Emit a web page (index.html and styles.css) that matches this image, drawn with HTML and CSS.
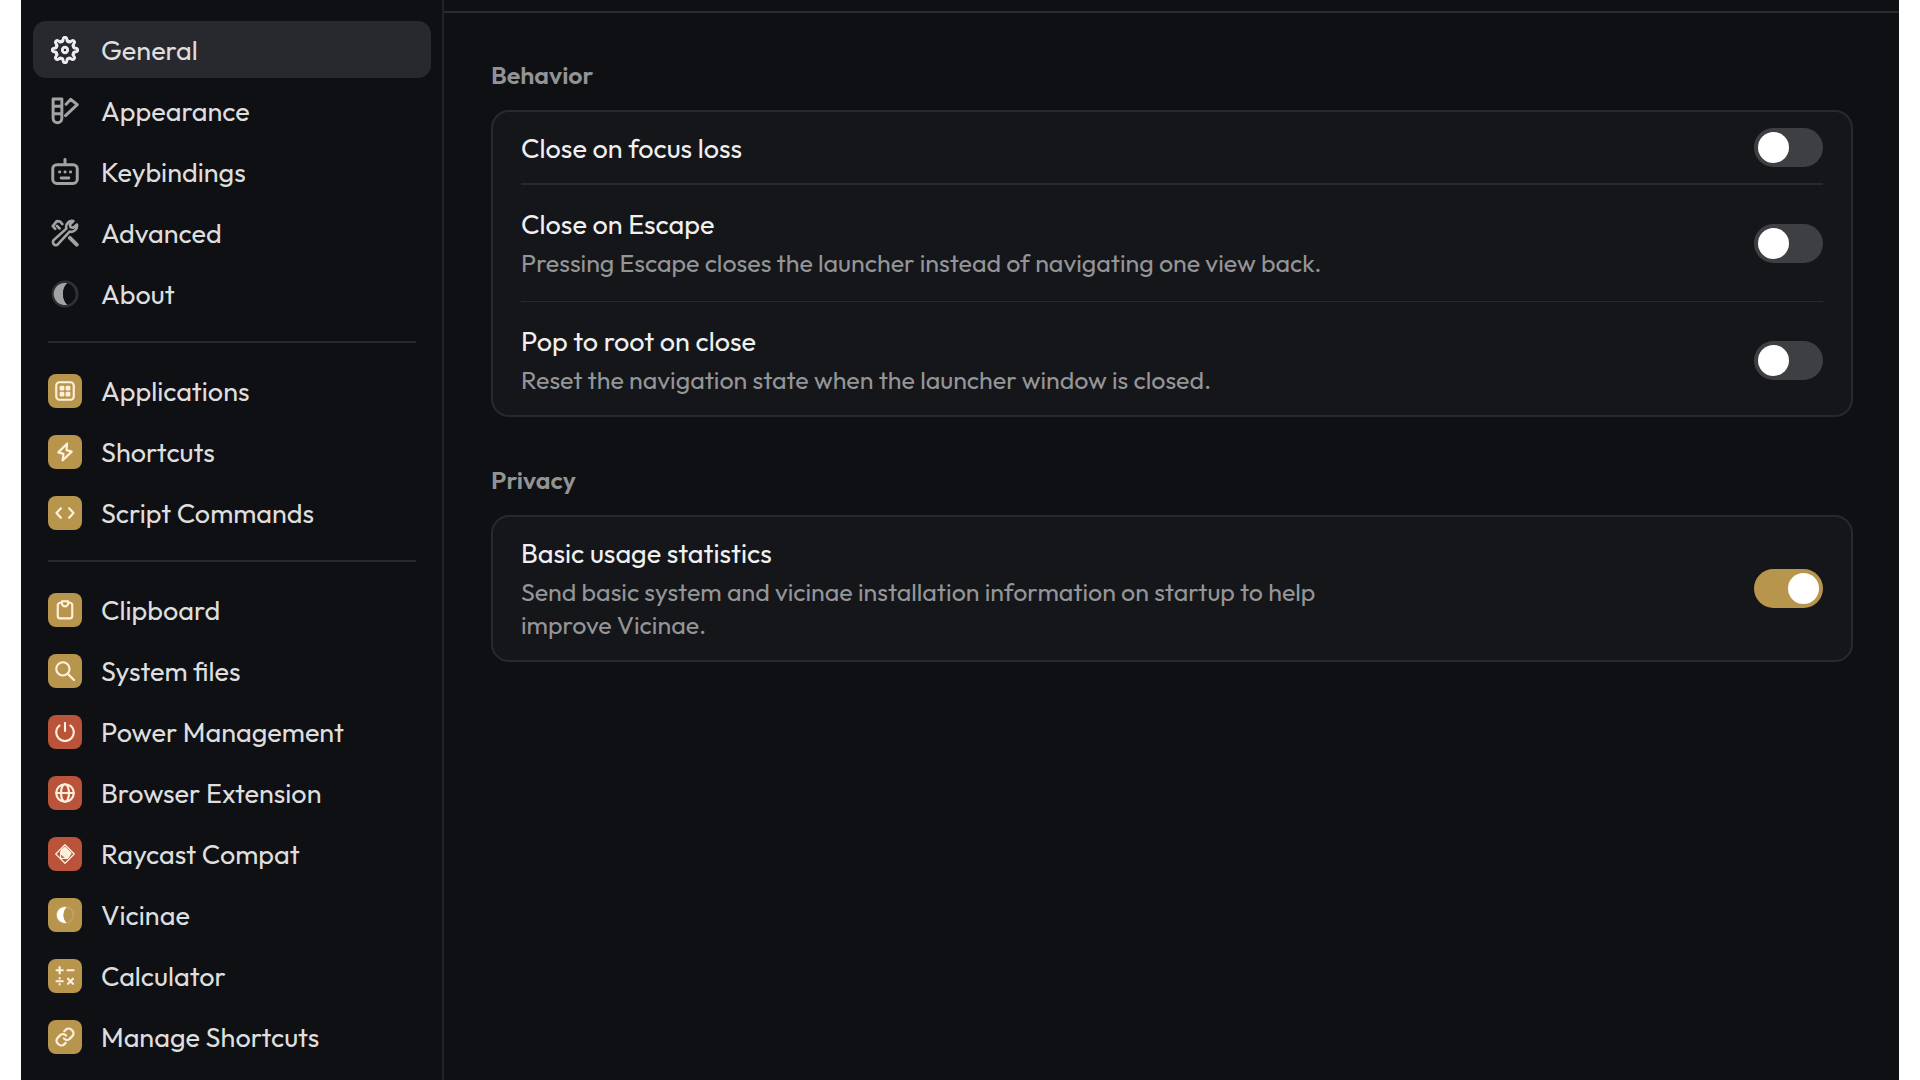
FILE: index.html
```html
<!DOCTYPE html>
<html lang="en">
<head>
<meta charset="utf-8">
<meta name="viewport" content="width=device-width, initial-scale=1">
<title>Settings</title>
<link rel="stylesheet" href="styles.css">
</head>
<body>
<div class="window">
  <nav class="sidebar" aria-label="Settings">
    <div class="nav-group">
      <a class="nav-item nav-item--active" href="#general" aria-current="page">
        <span class="icon"><svg viewBox="0 0 24 24" stroke-width="2.5"><defs><path id="tooth" d="M-3.1-7.4Q-1.9-6.9-1.7-8.6-1.6-10.9 0-10.9 1.6-10.9 1.7-8.6 1.9-6.9 3.1-7.4"/></defs><g transform="translate(12 12)"><use href="#tooth"/><use href="#tooth" transform="rotate(45)"/><use href="#tooth" transform="rotate(90)"/><use href="#tooth" transform="rotate(135)"/><use href="#tooth" transform="rotate(180)"/><use href="#tooth" transform="rotate(225)"/><use href="#tooth" transform="rotate(270)"/><use href="#tooth" transform="rotate(315)"/><circle r="2.3"/></g></svg></span>
        General
      </a>
      <a class="nav-item" href="#appearance">
        <span class="icon"><svg viewBox="0 0 16 16"><path d="M1.2 1.2h5v11a2.5 2.5 0 0 1-5 0zM1.2 5.3h5M1.2 9.6h5M8.6 4.1l2.7-2.8 3.7 3.1-6.7 6.2"/></svg></span>
        Appearance
      </a>
      <a class="nav-item" href="#keybindings">
        <span class="icon"><svg viewBox="0 0 16 16"><rect x="1" y="3.8" width="14" height="10.8" rx="2.4"/><path d="M8 .9v2.6M5.8 11.4h4.4"/><path d="M4.9 8h.1M8 8h.1M11.1 8h.1"/></svg></span>
        Keybindings
      </a>
      <a class="nav-item" href="#advanced">
        <span class="icon"><svg viewBox="0 0 16 16" stroke-width="1.5"><path d="M12.8 1.2a3.4 3.4 0 0 0-4 4.3L1.6 12a1.6 1.6 0 0 0 2.4 2.4l6.6-7.2a3.4 3.4 0 0 0 4.2-4L12.7 5l-1.5-.3-.4-1.5zM2.4 5.6L1 4.1l2.3-2.9 1.8.2 1.4 1.5M3.4 3.9l1.5 1.5"/><path d="M10.8 10.8l3.9 3.9" stroke-width="2.2"/></svg></span>
        Advanced
      </a>
      <a class="nav-item" href="#about">
        <span class="icon"><svg viewBox="0 0 16 16" stroke="none"><circle cx="8" cy="8" r="7.7" fill="#303134"/><path d="M9.4 1.9a6.3 6.3 0 1 0 0 12.2C6 11.5 6 4.5 9.4 1.9z" fill="#a2a3a5"/><path d="M9.4 1.9C6 4.5 6 11.5 9.4 14.1a6.3 6.3 0 0 0 0-12.2z" fill="#0f1013"/></svg></span>
        About
      </a>
    </div>
    <hr class="nav-rule">
    <div class="nav-group">
      <a class="nav-item" href="#applications">
        <span class="icon tile"><svg viewBox="0 0 16 16"><rect x="1" y="1" width="14" height="14" rx="2.6"/><g fill="currentColor" stroke="none"><rect x="3.7" y="3.7" width="3.8" height="3.8" rx="1"/><rect x="8.5" y="3.7" width="3.8" height="3.8" rx="1"/><rect x="3.7" y="8.5" width="3.8" height="3.8" rx="1"/><rect x="8.5" y="8.5" width="3.8" height="3.8" rx="1"/></g></svg></span>
        Applications
      </a>
      <a class="nav-item" href="#shortcuts">
        <span class="icon tile"><svg viewBox="0 0 16 16"><path d="M9.7 1.3L2.6 8.3l4.2 1.2-.8 5.2 7.4-7-4.2-1.2z"/></svg></span>
        Shortcuts
      </a>
      <a class="nav-item" href="#scripts">
        <span class="icon tile"><svg viewBox="0 0 16 16"><path d="M4.7 4.2L1.2 8l3.5 3.8M11.3 4.2L14.8 8l-3.5 3.8"/></svg></span>
        Script Commands
      </a>
    </div>
    <hr class="nav-rule">
    <div class="nav-group">
      <a class="nav-item" href="#clipboard">
        <span class="icon tile"><svg viewBox="0 0 16 16"><path d="M5.5 2.2H4.2a2 2 0 0 0-2 2v8.5a2 2 0 0 0 2 2h7.6a2 2 0 0 0 2-2V4.2a2 2 0 0 0-2-2h-1.3"/><path d="M5.5 1h5v1.6a2.5 2.5 0 0 1-5 0z"/></svg></span>
        Clipboard
      </a>
      <a class="nav-item" href="#files">
        <span class="icon tile"><svg viewBox="0 0 16 16"><circle cx="6.3" cy="6.3" r="5.3"/><path d="M10.3 10.3l4.9 4.9"/></svg></span>
        System files
      </a>
      <a class="nav-item" href="#power">
        <span class="icon tile tile--red"><svg viewBox="0 0 16 16"><path d="M8 .8v6.4M3.6 2.8a7 7 0 1 0 8.8 0"/></svg></span>
        Power Management
      </a>
      <a class="nav-item" href="#browser">
        <span class="icon tile tile--red"><svg viewBox="0 0 16 16"><circle cx="8" cy="8" r="7"/><ellipse cx="8" cy="8" rx="3.2" ry="7"/><path d="M1 8h14"/></svg></span>
        Browser Extension
      </a>
      <a class="nav-item" href="#raycast">
        <span class="icon tile tile--red"><svg viewBox="0 0 16 16" stroke-width="1"><path d="M8 .6L15.4 8 8 15.4.6 8zM4.5 6v5.500h5.500"/><path d="M5.200 4.800L8 2.600l4.800 4.800-2 3.200H8L5.200 8z" fill="currentColor"/></svg></span>
        Raycast Compat
      </a>
      <a class="nav-item" href="#vicinae">
        <span class="icon tile"><svg viewBox="0 0 16 16" stroke="none"><circle cx="8" cy="8" r="7.2" fill="#c4a768"/><path d="M9.4 1.9a6.3 6.3 0 1 0 0 12.2C6 11.5 6 4.5 9.4 1.9z" fill="#fff"/><path d="M9.4 1.9C6 4.5 6 11.5 9.4 14.1a6.3 6.3 0 0 0 0-12.2z" fill="#b6944c"/></svg></span>
        Vicinae
      </a>
      <a class="nav-item" href="#calculator">
        <span class="icon tile"><svg viewBox="0 0 16 16"><path d="M3.7.9v5M1.2 3.4h5M9.9 3.4h5M1.2 12.2h5M3.7 9.7v.2M3.7 14.5v.2M10.4 10.2l4 4M14.4 10.2l-4 4"/></svg></span>
        Calculator
      </a>
      <a class="nav-item" href="#manage">
        <span class="icon tile"><svg viewBox="0 0 16 16"><path d="M7.4 3.4l1.3-1.3a3.1 3.1 0 0 1 4.4 0l.8.8a3.1 3.1 0 0 1 0 4.4l-2.400 2.400a3.1 3.1 0 0 1-4.400-.6"/><path d="M8.600 12.600l-1.300 1.300a3.100 3.100 0 0 1-4.400 0l-.8-.8a3.100 3.100 0 0 1 0-4.400l2.400-2.400a3.100 3.100 0 0 1 4.400.6"/></svg></span>
        Manage Shortcuts
      </a>
    </div>
  </nav>

  <main class="main">
    <div class="content">
      <section class="section">
        <h2 class="section-title">Behavior</h2>
        <div class="card">
          <div class="row row--single">
            <label class="row-title" for="focus-loss">Close on focus loss</label>
            <input class="switch" type="checkbox" role="switch" id="focus-loss">
          </div>
          <div class="row">
            <div class="row-text">
              <label class="row-title" for="escape">Close on Escape</label>
              <p class="row-desc">Pressing Escape closes the launcher instead of navigating one view back.</p>
            </div>
            <input class="switch" type="checkbox" role="switch" id="escape">
          </div>
          <div class="row">
            <div class="row-text">
              <label class="row-title" for="pop-root">Pop to root on close</label>
              <p class="row-desc">Reset the navigation state when the launcher window is closed.</p>
            </div>
            <input class="switch" type="checkbox" role="switch" id="pop-root">
          </div>
        </div>
      </section>
      <section class="section">
        <h2 class="section-title">Privacy</h2>
        <div class="card">
          <div class="row">
            <div class="row-text">
              <label class="row-title" for="statistics">Basic usage statistics</label>
              <p class="row-desc">Send basic system and vicinae installation information on startup to help improve Vicinae.</p>
            </div>
            <input class="switch" type="checkbox" role="switch" id="statistics" checked>
          </div>
        </div>
      </section>
    </div>
  </main>
</div>
</body>
</html>
```
FILE: styles.css
```css
* {
  box-sizing: border-box;
}

body {
  margin: 0;
  padding: 0 21px;
  background: #fff;
  color: #dedede;
  font-family: "Outfit", "Lato", sans-serif;
  font-size: 27px;
  font-weight: 400;
}

.window {
  display: flex;
  min-height: 100vh;
  background: #0f1013;
}

.sidebar {
  flex: 0 0 423px;
  padding: 21px 11px 12px 12px;
  border-right: 2px solid #222326;
}

.nav-group {
  display: flex;
  flex-direction: column;
  gap: 4px;
}

.nav-item {
  display: flex;
  align-items: center;
  gap: 19px;
  height: 57px;
  padding: 0 15px;
  border-radius: 13px;
  color: inherit;
  line-height: 36px;
  text-decoration: none;
  white-space: nowrap;
}

.nav-item--active {
  background: #28282f;
}

.nav-rule {
  height: 2px;
  margin: 19px 15px;
  border: 0;
  background: #28292c;
}

.icon {
  display: flex;
  align-items: center;
  justify-content: center;
  flex: none;
  width: 34px;
  height: 34px;
  color: #a2a3a5;
}

.icon svg {
  width: 28px;
  height: 28px;
  fill: none;
  stroke: currentColor;
  stroke-linecap: round;
  stroke-linejoin: round;
}

.icon svg:not([stroke-width]) {
  stroke-width: 1.7px;
}

.icon svg[stroke="none"] {
  stroke: none;
}

.nav-item--active .icon {
  color: #ececee;
}

.tile {
  border-radius: 8px;
  background: #b8954d;
  color: #fff0dc;
}

.tile--red {
  background: #b9533a;
}

.tile svg {
  width: 20px;
  height: 20px;
}

.main {
  flex: 1;
  min-width: 0;
  padding-top: 11px;
}

.content {
  display: flex;
  flex-direction: column;
  gap: 47px;
  padding: 46px 46px 46px 47px;
  border-top: 2px solid #2a2b2e;
}

.section-title {
  margin: 0 0 19px;
  color: #929395;
  font-size: 25px;
  font-weight: 600;
  line-height: 32px;
}

.card {
  padding: 0 28px;
  border: 2px solid #28292c;
  border-radius: 18px;
  background: #15161a;
}

.row {
  display: flex;
  align-items: center;
  justify-content: space-between;
  gap: 48px;
  padding: 21px 0;
}

.row + .row {
  border-top: 2px solid #28292c;
}

.row:first-child {
  padding-top: 18px;
}

.row:last-child {
  padding-bottom: 18px;
  border-top-width: 1px;
}

.row--single,
.row--single:first-child {
  padding: 16px 0;
}

.row-text {
  max-width: 820px;
}

.row-title {
  display: block;
  color: #f0f0f0;
  line-height: 36px;
}

.row-desc {
  margin: 5px 0 0;
  color: #949597;
  font-size: 25px;
  line-height: 33px;
}

.switch {
  appearance: none;
  display: flex;
  flex: none;
  width: 69px;
  height: 39px;
  margin: 0;
  padding: 4px;
  border-radius: 20px;
  background: #3e3f42;
}

.switch::before {
  content: "";
  width: 31px;
  height: 31px;
  border-radius: 50%;
  background: #fff;
}

.switch:checked {
  justify-content: flex-end;
  background: #b8954d;
}
```
